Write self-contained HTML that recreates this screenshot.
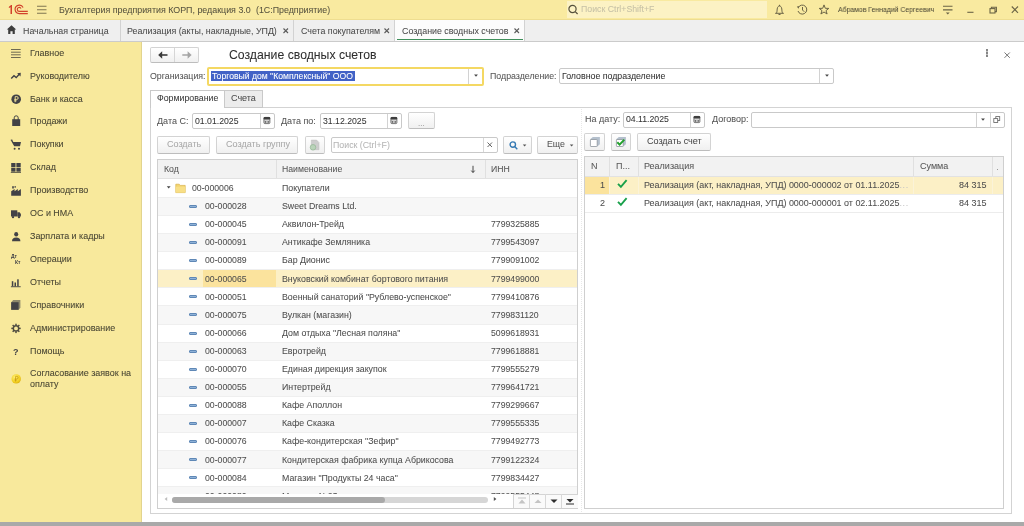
<!DOCTYPE html><html><head><meta charset="utf-8"><title>1C</title><style>
*{box-sizing:border-box;margin:0;padding:0}
html,body{width:1024px;height:526px;overflow:hidden;background:#fff;font-family:"Liberation Sans",sans-serif;color:#4d4d4d}
.a{position:absolute}
.t{position:absolute;white-space:nowrap;line-height:11px;font-size:8.7px;will-change:transform;-webkit-text-stroke:0.05px currentColor}
svg{position:absolute;overflow:visible}
.sep{position:absolute;top:0;width:1px;height:20px;background:#d4d4d4}
.inp{position:absolute;background:#fff;border:1px solid #c9c9c9;border-radius:2px}
.btn{position:absolute;background:linear-gradient(#ffffff,#f0f0f0);border:1px solid #d3d3d3;border-bottom-color:#bdbdbd;border-radius:2px}
.st{position:absolute;left:30.2px;font-size:8.95px;line-height:11px;color:#4a4734;white-space:nowrap;will-change:transform;-webkit-text-stroke:0.08px currentColor}
</style></head><body>
<div class="a" style="left:0px;top:0px;width:1024px;height:20px;background:#f9eaa0;"></div>
<div class="a" style="left:0px;top:19px;width:1024px;height:1px;background:#eedd90;"></div>
<svg style="left:8px;top:4px" width="22" height="12" viewBox="0 0 22 12"><g fill="none" stroke="#d2412c" stroke-width="1.15"><path d="M15.1 3.6 A4.2 4.2 0 1 0 11.2 9.6 H19.8"/><path d="M13.0 4.6 A1.95 1.95 0 1 0 11.2 7.35 H19.8"/></g><path d="M2.5 1 L4 1 L4 10 L2.5 10 Z M0.6 3.2 L2.6 1.1 L2.6 2.9 L1.3 4.1 Z" fill="#d2412c"/></svg>
<svg style="left:36px;top:5px" width="12" height="10" viewBox="0 0 12 10"><g stroke="#7f7650" stroke-width="1.1"><path d="M1 1.3H10.5M1 4.7H10.5M1 8.3H10.5"/></g></svg>
<div class="t" style="left:59px;top:4.7px;font-size:8.88px;color:#57533f;">Бухгалтерия предприятия КОРП, редакция 3.0</div>
<div class="t" style="left:255.8px;top:4.7px;font-size:8.85px;color:#57533f;">(1С:Предприятие)</div>
<div class="a" style="left:567px;top:1px;width:200px;height:17px;background:#fcf2c4;"></div>
<svg style="left:567px;top:4px" width="14" height="12" viewBox="0 0 14 12"><g fill="none" stroke="#55503c" stroke-width="1.2"><circle cx="5.5" cy="5" r="3.6"/><path d="M8.2 7.6L10.6 10"/></g></svg>
<div class="t" style="left:581px;top:4px;font-size:8.75px;color:#c6c1a6;">Поиск Ctrl+Shift+F</div>
<svg style="left:774px;top:4px" width="12" height="12" viewBox="0 0 12 12"><g fill="none" stroke="#6b6446" stroke-width="1"><path d="M1.2 9.3H9.8 M2.3 9.3 C3.2 8 3 6.5 3.2 5 C3.4 3 4.3 2 5.5 2 C6.7 2 7.6 3 7.8 5 C8 6.5 7.8 8 8.7 9.3"/><path d="M4.5 10.5H6.5"/><path d="M5.5 0.8V2"/></g></svg>
<svg style="left:796px;top:4px" width="13" height="12" viewBox="0 0 13 12"><g fill="none" stroke="#6b6446" stroke-width="1"><path d="M2.3 3.5 A4.5 4.5 0 1 1 2 7"/><path d="M6.5 3V6L8.3 7.8"/></g><path d="M0.8 2.5L3.3 2.2L2.6 4.8Z" fill="#6b6446"/></svg>
<svg style="left:818px;top:4px" width="12" height="12" viewBox="0 0 12 12"><path d="M6 0.9L7.3 4.3L10.8 4.4L8 6.6L9.1 10L6 8L2.9 10L4 6.6L1.2 4.4L4.7 4.3Z" fill="none" stroke="#6b6446" stroke-width="1"/></svg>
<div class="t" style="left:838px;top:4.3px;font-size:7.7px;color:#4f4b38;transform:scaleX(0.895);transform-origin:0 0">Абрамов Геннадий Сергеевич</div>
<svg style="left:942px;top:5px" width="12" height="11" viewBox="0 0 12 11"><g stroke="#6b6446" stroke-width="1.1"><path d="M1 1.3H10.5M1 4.9H10.5"/></g><path d="M3.8 7.6H7.7L5.75 9.6Z" fill="#6b6446"/></svg>
<svg style="left:966px;top:11px" width="9" height="3" viewBox="0 0 9 3"><path d="M1.3 1.3H7.5" stroke="#6b6446" stroke-width="1.1"/></svg>
<svg style="left:988px;top:6px" width="10" height="8" viewBox="0 0 10 8"><g fill="none" stroke="#6b6446" stroke-width="1.1"><rect x="2" y="2.6" width="5" height="4.4"/><path d="M3.4 2.6V1.2H8.4V5.6H7"/></g></svg>
<svg style="left:1010px;top:5px" width="10" height="10" viewBox="0 0 10 10"><path d="M1.8 1.5L8 7.8M8 1.5L1.8 7.8" stroke="#6b6446" stroke-width="1.1"/></svg>
<div class="a" style="left:0px;top:20px;width:1024px;height:21px;background:#efefef;"></div>
<div class="a" style="left:0px;top:41px;width:1024px;height:1px;background:#cbcbcb;"></div>
<svg style="left:6px;top:24px" width="11" height="11" viewBox="0 0 11 11"><path d="M5.5 1.2L10.2 5.6H8.8V10H6.6V7.3H4.4V10H2.2V5.6H0.8Z" fill="#3d3d3d"/></svg>
<div class="t" style="left:23px;top:25.7px;font-size:8.85px;color:#4a4a4a;">Начальная страница</div>
<div class="a" style="left:120px;top:20px;width:1px;height:21px;background:#d2d2d2;"></div>
<div class="t" style="left:127px;top:25.7px;font-size:8.85px;color:#4a4a4a;">Реализация (акты, накладные, УПД)</div>
<svg style="left:282px;top:26.8px" width="8" height="8" viewBox="0 0 8 8"><path d="M1.5 1.5L6 6M6 1.5L1.5 6" stroke="#5a5a5a" stroke-width="1.1"/></svg>
<div class="a" style="left:293px;top:20px;width:1px;height:21px;background:#d2d2d2;"></div>
<div class="t" style="left:301px;top:25.7px;font-size:8.85px;color:#4a4a4a;">Счета покупателям</div>
<svg style="left:383px;top:26.8px" width="8" height="8" viewBox="0 0 8 8"><path d="M1.5 1.5L6 6M6 1.5L1.5 6" stroke="#5a5a5a" stroke-width="1.1"/></svg>
<div class="a" style="left:394px;top:20px;width:1px;height:21px;background:#d2d2d2;"></div>
<div class="a" style="left:395px;top:20px;width:129px;height:21px;background:#fcfcfc;"></div>
<div class="a" style="left:397px;top:39px;width:126px;height:1.4px;background:#3f8f5a;"></div>
<div class="t" style="left:402px;top:25.7px;font-size:8.85px;color:#4a4a4a;">Создание сводных счетов</div>
<svg style="left:513px;top:26.8px" width="8" height="8" viewBox="0 0 8 8"><path d="M1.5 1.5L6 6M6 1.5L1.5 6" stroke="#5a5a5a" stroke-width="1.1"/></svg>
<div class="a" style="left:524px;top:20px;width:1px;height:21px;background:#d2d2d2;"></div>
<div class="a" style="left:0px;top:42px;width:141px;height:480px;background:#f8e99c;"></div>
<div class="a" style="left:141px;top:42px;width:1px;height:480px;background:#e2d48e;"></div>
<div class="st" style="top:47.7px">Главное</div>
<div class="st" style="top:70.6px">Руководителю</div>
<div class="st" style="top:93.5px">Банк и касса</div>
<div class="st" style="top:116.4px">Продажи</div>
<div class="st" style="top:139.3px">Покупки</div>
<div class="st" style="top:162.2px">Склад</div>
<div class="st" style="top:185.1px">Производство</div>
<div class="st" style="top:208.0px">ОС и НМА</div>
<div class="st" style="top:230.9px">Зарплата и кадры</div>
<div class="st" style="top:253.8px">Операции</div>
<div class="st" style="top:276.7px">Отчеты</div>
<div class="st" style="top:299.6px">Справочники</div>
<div class="st" style="top:322.5px">Администрирование</div>
<div class="st" style="top:346.2px">Помощь</div>
<div class="st" style="top:368.4px">Согласование заявок на</div>
<div class="st" style="top:378.7px">оплату</div>
<svg style="left:10px;top:48px" width="12" height="11" viewBox="0 0 12 11"><g stroke="#6f6a52" stroke-width="1"><path d="M1 1.5H10.7M1 4.2H10.7M1 6.8H10.7M1 9.5H10.7"/></g></svg>
<svg style="left:10px;top:72px" width="12" height="8" viewBox="0 0 12 8"><path d="M1.2 6.6L4 3.8L6.2 5.6L9.2 2.3" fill="none" stroke="#424246" stroke-width="1.4"/><path d="M7.2 1.2L10.8 0.8L10.5 4.4Z" fill="#424246"/></svg>
<svg style="left:10px;top:93px" width="12" height="12" viewBox="0 0 12 12"><circle cx="6.2" cy="6.2" r="4.8" fill="#424246"/><path d="M5.2 9.2V3.6H6.8A1.4 1.4 0 0 1 6.8 6.4H4.3M4.3 7.8H6.6" fill="none" stroke="#f8e99c" stroke-width="0.9"/></svg>
<svg style="left:11px;top:115px" width="11" height="12" viewBox="0 0 11 12"><path d="M1.2 4.2H9.2V11H1.2Z" fill="#424246"/><path d="M3.2 5V2.8A2 2 0 0 1 7.2 2.8V5" fill="none" stroke="#424246" stroke-width="1"/></svg>
<svg style="left:10px;top:139px" width="12" height="12" viewBox="0 0 12 12"><path d="M0.8 1.2H2.4L3.3 3H11L10 7.2H4.2Z" fill="#424246"/><path d="M0.8 1.1L2.4 1.1" stroke="#424246" stroke-width="1"/><circle cx="4.6" cy="9.8" r="1" fill="#424246"/><circle cx="9" cy="9.8" r="1" fill="#424246"/></svg>
<svg style="left:10px;top:162px" width="12" height="12" viewBox="0 0 12 12"><rect x="1.2" y="1" width="4.3" height="4" fill="#424246"/><rect x="6.4" y="1" width="4.3" height="4" fill="#424246"/><rect x="1.2" y="5.7" width="4.3" height="4" fill="#424246"/><rect x="6.4" y="5.7" width="4.3" height="4" fill="#424246"/><rect x="0.8" y="10" width="10.2" height="1" fill="#6f6a52"/></svg>
<svg style="left:10px;top:185px" width="12" height="12" viewBox="0 0 12 12"><path d="M1.2 10.8V6.2L4.6 4L4.6 6.2L7.8 4.1V6.2L10.9 4.1V10.8Z" fill="#424246"/><rect x="2.2" y="1.2" width="1.6" height="2.3" fill="#424246"/><rect x="4.5" y="1.2" width="1.4" height="1.4" fill="#424246"/></svg>
<svg style="left:10px;top:209px" width="12" height="10" viewBox="0 0 12 10"><path d="M1 1.3H7.3V7.5H1Z" fill="#424246"/><path d="M7.3 3.2H9.6L10.9 5V7.5H7.3Z" fill="#424246"/><circle cx="3" cy="8.1" r="1.2" fill="#424246"/><circle cx="9" cy="8.1" r="1.2" fill="#424246"/></svg>
<svg style="left:11px;top:231px" width="11" height="11" viewBox="0 0 11 11"><ellipse cx="5.2" cy="3.2" rx="2" ry="2.3" fill="#424246"/><path d="M1 10.3C1 7.5 2.5 6.4 5.2 6.4C7.9 6.4 9.4 7.5 9.4 10.3Z" fill="#424246"/></svg>
<div class="a" style="left:11px;top:254px;font-size:5px;line-height:5px;font-weight:bold;color:#424246;will-change:transform">Дт</div>
<div class="a" style="left:15px;top:259.5px;font-size:5px;line-height:5px;font-weight:bold;color:#424246;will-change:transform">Кт</div>
<svg style="left:10px;top:278px" width="12" height="10" viewBox="0 0 12 10"><g fill="#424246"><rect x="1.8" y="3.2" width="1.5" height="5.2"/><rect x="4.5" y="4.5" width="1.5" height="3.9"/><rect x="7.2" y="1.3" width="1.5" height="7.1"/><rect x="0.9" y="8.3" width="9.8" height="0.9"/></g></svg>
<svg style="left:10px;top:299px" width="12" height="12" viewBox="0 0 12 12"><path d="M3.2 1H10.4V8.8L8.6 10.8H1.2V3.2Z" fill="#8f8a6c"/><rect x="1.2" y="3.2" width="7.4" height="7.6" fill="#424246"/></svg>
<svg style="left:10px;top:323px" width="12" height="11" viewBox="0 0 12 11"><g transform="translate(6,5.4)" fill="#4f4c40"><circle r="2.7" fill="none" stroke="#4f4c40" stroke-width="1.5"/><rect x="-0.75" y="-4.7" width="1.5" height="1.9" transform="rotate(0)"/><rect x="-0.75" y="-4.7" width="1.5" height="1.9" transform="rotate(45)"/><rect x="-0.75" y="-4.7" width="1.5" height="1.9" transform="rotate(90)"/><rect x="-0.75" y="-4.7" width="1.5" height="1.9" transform="rotate(135)"/><rect x="-0.75" y="-4.7" width="1.5" height="1.9" transform="rotate(180)"/><rect x="-0.75" y="-4.7" width="1.5" height="1.9" transform="rotate(225)"/><rect x="-0.75" y="-4.7" width="1.5" height="1.9" transform="rotate(270)"/><rect x="-0.75" y="-4.7" width="1.5" height="1.9" transform="rotate(315)"/></g></svg>
<div class="a" style="left:13px;top:346.5px;font-size:9px;line-height:10px;font-weight:bold;color:#424246;will-change:transform">?</div>
<svg style="left:10px;top:372px" width="13" height="13" viewBox="0 0 13 13"><defs><radialGradient id="cg" cx="0.4" cy="0.35" r="0.7"><stop offset="0" stop-color="#fff27a"/><stop offset="0.7" stop-color="#f2cf1f"/><stop offset="1" stop-color="#d9ad10"/></radialGradient></defs><circle cx="6.2" cy="6.9" r="4.7" fill="url(#cg)"/><path d="M5.6 9.6V4.4H6.8A1.3 1.3 0 0 1 6.8 7H4.6M4.6 8.2H6.6" fill="none" stroke="#c99b0c" stroke-width="0.8"/></svg>
<div class="a" style="left:0px;top:522px;width:1024px;height:4px;background:#a9a9a9;"></div>
<div class="btn" style="left:150px;top:47px;width:49px;height:16px"></div>
<div class="a" style="left:174px;top:48px;width:1px;height:14px;background:#d6d6d6;"></div>
<svg style="left:156.6px;top:50.3px" width="12" height="10" viewBox="0 0 12 10"><path d="M10.5 5H3" stroke="#3a3a3a" stroke-width="1.6"/><path d="M1.2 5L5.2 1.3V8.7Z" fill="#3a3a3a"/></svg>
<svg style="left:180.8px;top:50.3px" width="12" height="10" viewBox="0 0 12 10"><path d="M1.3 5H8.8" stroke="#a4a4a4" stroke-width="1.5"/><path d="M10.6 5L6.6 1.3V8.7Z" fill="#a4a4a4"/></svg>
<div class="t" style="left:228.6px;top:48px;font-size:12.25px;color:#2e2e2e;line-height:14px">Создание сводных счетов</div>
<svg style="left:984px;top:48px" width="6" height="12" viewBox="0 0 6 12"><g fill="#6a6a6a"><circle cx="3" cy="2" r="0.9"/><circle cx="3" cy="5" r="0.9"/><circle cx="3" cy="8" r="0.9"/><rect x="2.6" y="1" width="0.8" height="8"/></g></svg>
<svg style="left:1003px;top:50.5px" width="9" height="9" viewBox="0 0 9 9"><path d="M1.5 1.5L6.8 6.8M6.8 1.5L1.5 6.8" stroke="#666" stroke-width="0.9"/></svg>
<div class="t" style="left:150.4px;top:71px;font-size:8.8px;color:#555;">Организация:</div>
<div class="a" style="left:207px;top:67px;width:277px;height:19px;background:#f4d863;border-radius:2px"></div>
<div class="a" style="left:209px;top:69px;width:273px;height:15px;background:#fff;"></div>
<div class="a" style="left:468px;top:69px;width:1px;height:15px;background:#d2d2d2;"></div>
<svg style="left:472px;top:73px" width="8" height="6" viewBox="0 0 8 6"><path d="M2.1 1.5H5.9L4 3.7Z" fill="#444"/></svg>
<div class="a" style="left:211px;top:71px;width:143.5px;height:10px;background:#4262c6;"></div>
<div class="t" style="left:211.8px;top:70.5px;font-size:8.65px;color:#ffffff;">Торговый дом "Комплексный" ООО</div>
<div class="t" style="left:489.6px;top:71px;font-size:8.8px;color:#555;">Подразделение:</div>
<div class="inp" style="left:559px;top:68px;width:275px;height:16px"></div>
<div class="a" style="left:819px;top:69px;width:1px;height:14px;background:#d2d2d2;"></div>
<svg style="left:823px;top:73px" width="8" height="6" viewBox="0 0 8 6"><path d="M2.1 1.5H5.9L4 3.7Z" fill="#444"/></svg>
<div class="t" style="left:562px;top:71px;font-size:8.8px;color:#333;">Головное подразделение</div>
<div class="a" style="left:150px;top:107px;width:862px;height:407px;background:#fff;border:1px solid #d3d3d3"></div>
<div class="a" style="left:224px;top:90px;width:39px;height:18px;background:#ececec;border:1px solid #c9c9c9"></div>
<div class="a" style="left:150px;top:90px;width:75px;height:18px;background:#fff;border:1px solid #c9c9c9;border-bottom:none"></div>
<div class="t" style="left:157.2px;top:93px;font-size:8.8px;color:#3a3a3a;">Формирование</div>
<div class="t" style="left:231.4px;top:93px;font-size:9px;color:#4a4a4a;">Счета</div>
<div class="t" style="left:157.3px;top:116px;font-size:9px;color:#555;">Дата С:</div>
<div class="inp" style="left:192px;top:113px;width:83px;height:16px"></div>
<div class="a" style="left:260px;top:114px;width:1px;height:14px;background:#d2d2d2;"></div>
<svg style="left:262px;top:116px" width="10" height="10" viewBox="0 0 10 10"><rect x="1.9" y="1.4" width="6" height="6.2" rx="1" fill="#d2d2d2" stroke="#5a5a5a" stroke-width="0.8"/><rect x="1.6" y="1.1" width="6.6" height="2.4" rx="1" fill="#3e3e3e"/><rect x="2.9" y="5.3" width="1.3" height="1.3" fill="#444"/><rect x="5.6" y="5.3" width="1.3" height="1.3" fill="#444"/></svg>
<div class="t" style="left:194.7px;top:116px;font-size:8.7px;color:#333;">01.01.2025</div>
<div class="t" style="left:281.3px;top:116px;font-size:9px;color:#555;">Дата по:</div>
<div class="inp" style="left:320px;top:113px;width:82px;height:16px"></div>
<div class="a" style="left:387px;top:114px;width:1px;height:14px;background:#d2d2d2;"></div>
<svg style="left:389px;top:116px" width="10" height="10" viewBox="0 0 10 10"><rect x="1.9" y="1.4" width="6" height="6.2" rx="1" fill="#d2d2d2" stroke="#5a5a5a" stroke-width="0.8"/><rect x="1.6" y="1.1" width="6.6" height="2.4" rx="1" fill="#3e3e3e"/><rect x="2.9" y="5.3" width="1.3" height="1.3" fill="#444"/><rect x="5.6" y="5.3" width="1.3" height="1.3" fill="#444"/></svg>
<div class="t" style="left:322.5px;top:116px;font-size:8.7px;color:#333;">31.12.2025</div>
<div class="btn" style="left:408px;top:112px;width:27px;height:17px"></div>
<div class="t" style="left:417.5px;top:117.5px;font-size:8px;color:#8a8a8a;">...</div>
<div class="btn" style="left:157px;top:136px;width:53px;height:18px"></div>
<div class="t" style="left:166.5px;top:139px;font-size:9px;color:#a9a9a9;">Создать</div>
<div class="btn" style="left:216px;top:136px;width:82px;height:18px"></div>
<div class="t" style="left:225.8px;top:139px;font-size:9.05px;color:#a9a9a9;">Создать группу</div>
<div class="btn" style="left:305px;top:136px;width:20px;height:18px"></div>
<svg style="left:308px;top:138px" width="14" height="14" viewBox="0 0 14 14"><path d="M3.3 2.1H8.6L11 4.5V11.7H3.3Z" fill="#cdcdcd" stroke="#bdbdbd" stroke-width="0.5"/><circle cx="5" cy="9.3" r="2.8" fill="#b9d3b9" stroke="#93b693" stroke-width="0.7"/></svg>
<div class="inp" style="left:331px;top:137px;width:167px;height:16px"></div>
<div class="a" style="left:483px;top:138px;width:1px;height:14px;background:#d8d8d8;"></div>
<svg style="left:486px;top:141px" width="8" height="8" viewBox="0 0 8 8"><path d="M1.5 1.5L6 6M6 1.5L1.5 6" stroke="#666" stroke-width="1"/></svg>
<div class="t" style="left:333px;top:140px;font-size:8.8px;color:#b5b5b5;">Поиск (Ctrl+F)</div>
<div class="btn" style="left:503px;top:136px;width:29px;height:18px"></div>
<svg style="left:508px;top:139.6px" width="12" height="12" viewBox="0 0 12 12"><g fill="none" stroke="#3479b3" stroke-width="1.4"><circle cx="4.8" cy="4.6" r="2.7"/><path d="M6.9 6.8L9.3 9.2"/></g></svg>
<svg style="left:522px;top:142.8px" width="6" height="5" viewBox="0 0 6 5"><path d="M0.8 1.5H4.4L2.6 3.4Z" fill="#555"/></svg>
<div class="btn" style="left:537px;top:136px;width:41px;height:18px"></div>
<div class="t" style="left:546.5px;top:139.4px;font-size:8.8px;color:#555;">Еще</div>
<svg style="left:569px;top:142.8px" width="6" height="5" viewBox="0 0 6 5"><path d="M0.8 1.5H4.4L2.6 3.4Z" fill="#555"/></svg>
<div class="a" style="left:157px;top:159px;width:421px;height:350px;background:#fff;border:1px solid #cfcfcf"></div>
<div class="a" style="left:158px;top:160px;width:419px;height:19px;background:#f2f2f2;"></div>
<div class="a" style="left:158px;top:178px;width:419px;height:1px;background:#e2e2e2;"></div>
<div class="a" style="left:276px;top:160px;width:1px;height:18px;background:#e0e0e0;"></div>
<div class="a" style="left:485px;top:160px;width:1px;height:18px;background:#e0e0e0;"></div>
<div class="t" style="left:163.7px;top:164px;font-size:8.7px;color:#575757;">Код</div>
<div class="t" style="left:282px;top:164px;font-size:8.7px;color:#575757;">Наименование</div>
<svg style="left:469px;top:164px" width="8" height="10" viewBox="0 0 8 10"><path d="M4 1.8V8.2" stroke="#333" stroke-width="0.9"/><path d="M2.3 6.6L4 8.6L5.7 6.6" fill="none" stroke="#333" stroke-width="0.9"/></svg>
<div class="t" style="left:490.7px;top:164px;font-size:8.7px;color:#575757;">ИНН</div>
<div class="a" style="left:158px;top:179px;width:419px;height:315px;overflow:hidden">
<svg style="left:8px;top:6px" width="6" height="5" viewBox="0 0 6 5"><path d="M0.8 1.2H4.6L2.7 3.6Z" fill="#444"/></svg>
<svg style="left:17px;top:4px" width="12" height="11" viewBox="0 0 12 11"><path d="M0.8 1.2H4.2L5.2 2.4H10.2V9.6H0.8Z" fill="#f3d56f" stroke="#d9b24a" stroke-width="0.7"/><path d="M0.8 3.6H10.2V9.6H0.8Z" fill="#f8df86"/></svg>
<div class="t" style="left:34.3px;top:3.9999999999999885px;font-size:8.7px;color:#4d4d4d;">00-000006</div>
<div class="t" style="left:124px;top:3.9999999999999885px;font-size:8.8px;color:#4d4d4d;">Покупатели</div>
<div class="t" style="left:332.7px;top:3.9999999999999885px;font-size:8.7px;color:#4d4d4d;"></div>
<div class="a" style="left:0px;top:18px;width:419px;height:18px;background:#f7f7f7;"></div>
<div class="a" style="left:0px;top:18px;width:419px;height:1px;background:#efefef;"></div>
<div class="a" style="left:30.8px;top:25.8px;width:8.2px;height:2.8px;background:#8fb2d8;border:0.7px solid #5f88b6;border-radius:1px"></div>
<div class="t" style="left:46.8px;top:22.099999999999984px;font-size:8.7px;color:#4d4d4d;">00-000028</div>
<div class="t" style="left:124px;top:22.099999999999984px;font-size:8.8px;color:#4d4d4d;">Sweet Dreams Ltd.</div>
<div class="t" style="left:332.7px;top:22.099999999999984px;font-size:8.7px;color:#4d4d4d;"></div>
<div class="a" style="left:0px;top:36px;width:419px;height:1px;background:#efefef;"></div>
<div class="a" style="left:30.8px;top:43.8px;width:8.2px;height:2.8px;background:#8fb2d8;border:0.7px solid #5f88b6;border-radius:1px"></div>
<div class="t" style="left:46.8px;top:40.199999999999974px;font-size:8.7px;color:#4d4d4d;">00-000045</div>
<div class="t" style="left:124px;top:40.199999999999974px;font-size:8.8px;color:#4d4d4d;">Аквилон-Трейд</div>
<div class="t" style="left:332.7px;top:40.199999999999974px;font-size:8.7px;color:#4d4d4d;">7799325885</div>
<div class="a" style="left:0px;top:54px;width:419px;height:18px;background:#f7f7f7;"></div>
<div class="a" style="left:0px;top:54px;width:419px;height:1px;background:#efefef;"></div>
<div class="a" style="left:30.8px;top:61.8px;width:8.2px;height:2.8px;background:#8fb2d8;border:0.7px solid #5f88b6;border-radius:1px"></div>
<div class="t" style="left:46.8px;top:58.3px;font-size:8.7px;color:#4d4d4d;">00-000091</div>
<div class="t" style="left:124px;top:58.3px;font-size:8.8px;color:#4d4d4d;">Антикафе Земляника</div>
<div class="t" style="left:332.7px;top:58.3px;font-size:8.7px;color:#4d4d4d;">7799543097</div>
<div class="a" style="left:0px;top:72px;width:419px;height:1px;background:#efefef;"></div>
<div class="a" style="left:30.8px;top:79.8px;width:8.2px;height:2.8px;background:#8fb2d8;border:0.7px solid #5f88b6;border-radius:1px"></div>
<div class="t" style="left:46.8px;top:76.39999999999999px;font-size:8.7px;color:#4d4d4d;">00-000089</div>
<div class="t" style="left:124px;top:76.39999999999999px;font-size:8.8px;color:#4d4d4d;">Бар Дионис</div>
<div class="t" style="left:332.7px;top:76.39999999999999px;font-size:8.7px;color:#4d4d4d;">7799091002</div>
<div class="a" style="left:0px;top:90px;width:419px;height:18px;background:#fcf0c6;"></div>
<div class="a" style="left:45px;top:90px;width:73px;height:18px;background:#fbe39d;"></div>
<div class="a" style="left:0px;top:90px;width:419px;height:1px;background:#efefef;"></div>
<div class="a" style="left:30.8px;top:97.8px;width:8.2px;height:2.8px;background:#8fb2d8;border:0.7px solid #5f88b6;border-radius:1px"></div>
<div class="t" style="left:46.8px;top:94.49999999999999px;font-size:8.7px;color:#4d4d4d;">00-000065</div>
<div class="t" style="left:124px;top:94.49999999999999px;font-size:8.8px;color:#4d4d4d;">Внуковский комбинат бортового питания</div>
<div class="t" style="left:332.7px;top:94.49999999999999px;font-size:8.7px;color:#4d4d4d;">7799499000</div>
<div class="a" style="left:0px;top:108px;width:419px;height:1px;background:#efefef;"></div>
<div class="a" style="left:30.8px;top:115.8px;width:8.2px;height:2.8px;background:#8fb2d8;border:0.7px solid #5f88b6;border-radius:1px"></div>
<div class="t" style="left:46.8px;top:112.60000000000001px;font-size:8.7px;color:#4d4d4d;">00-000051</div>
<div class="t" style="left:124px;top:112.60000000000001px;font-size:8.8px;color:#4d4d4d;">Военный санаторий "Рублево-успенское"</div>
<div class="t" style="left:332.7px;top:112.60000000000001px;font-size:8.7px;color:#4d4d4d;">7799410876</div>
<div class="a" style="left:0px;top:126px;width:419px;height:19px;background:#f7f7f7;"></div>
<div class="a" style="left:0px;top:126px;width:419px;height:1px;background:#efefef;"></div>
<div class="a" style="left:30.8px;top:133.8px;width:8.2px;height:2.8px;background:#8fb2d8;border:0.7px solid #5f88b6;border-radius:1px"></div>
<div class="t" style="left:46.8px;top:130.7px;font-size:8.7px;color:#4d4d4d;">00-000075</div>
<div class="t" style="left:124px;top:130.7px;font-size:8.8px;color:#4d4d4d;">Вулкан (магазин)</div>
<div class="t" style="left:332.7px;top:130.7px;font-size:8.7px;color:#4d4d4d;">7799831120</div>
<div class="a" style="left:0px;top:145px;width:419px;height:1px;background:#efefef;"></div>
<div class="a" style="left:30.8px;top:152.8px;width:8.2px;height:2.8px;background:#8fb2d8;border:0.7px solid #5f88b6;border-radius:1px"></div>
<div class="t" style="left:46.8px;top:148.8px;font-size:8.7px;color:#4d4d4d;">00-000066</div>
<div class="t" style="left:124px;top:148.8px;font-size:8.8px;color:#4d4d4d;">Дом отдыха "Лесная поляна"</div>
<div class="t" style="left:332.7px;top:148.8px;font-size:8.7px;color:#4d4d4d;">5099618931</div>
<div class="a" style="left:0px;top:163px;width:419px;height:18px;background:#f7f7f7;"></div>
<div class="a" style="left:0px;top:163px;width:419px;height:1px;background:#efefef;"></div>
<div class="a" style="left:30.8px;top:170.8px;width:8.2px;height:2.8px;background:#8fb2d8;border:0.7px solid #5f88b6;border-radius:1px"></div>
<div class="t" style="left:46.8px;top:166.90000000000003px;font-size:8.7px;color:#4d4d4d;">00-000063</div>
<div class="t" style="left:124px;top:166.90000000000003px;font-size:8.8px;color:#4d4d4d;">Евротрейд</div>
<div class="t" style="left:332.7px;top:166.90000000000003px;font-size:8.7px;color:#4d4d4d;">7799618881</div>
<div class="a" style="left:0px;top:181px;width:419px;height:1px;background:#efefef;"></div>
<div class="a" style="left:30.8px;top:188.8px;width:8.2px;height:2.8px;background:#8fb2d8;border:0.7px solid #5f88b6;border-radius:1px"></div>
<div class="t" style="left:46.8px;top:185.0px;font-size:8.7px;color:#4d4d4d;">00-000070</div>
<div class="t" style="left:124px;top:185.0px;font-size:8.8px;color:#4d4d4d;">Единая дирекция закупок</div>
<div class="t" style="left:332.7px;top:185.0px;font-size:8.7px;color:#4d4d4d;">7799555279</div>
<div class="a" style="left:0px;top:199px;width:419px;height:18px;background:#f7f7f7;"></div>
<div class="a" style="left:0px;top:199px;width:419px;height:1px;background:#efefef;"></div>
<div class="a" style="left:30.8px;top:206.8px;width:8.2px;height:2.8px;background:#8fb2d8;border:0.7px solid #5f88b6;border-radius:1px"></div>
<div class="t" style="left:46.8px;top:203.10000000000002px;font-size:8.7px;color:#4d4d4d;">00-000055</div>
<div class="t" style="left:124px;top:203.10000000000002px;font-size:8.8px;color:#4d4d4d;">Интертрейд</div>
<div class="t" style="left:332.7px;top:203.10000000000002px;font-size:8.7px;color:#4d4d4d;">7799641721</div>
<div class="a" style="left:0px;top:217px;width:419px;height:1px;background:#efefef;"></div>
<div class="a" style="left:30.8px;top:224.8px;width:8.2px;height:2.8px;background:#8fb2d8;border:0.7px solid #5f88b6;border-radius:1px"></div>
<div class="t" style="left:46.8px;top:221.2px;font-size:8.7px;color:#4d4d4d;">00-000088</div>
<div class="t" style="left:124px;top:221.2px;font-size:8.8px;color:#4d4d4d;">Кафе Аполлон</div>
<div class="t" style="left:332.7px;top:221.2px;font-size:8.7px;color:#4d4d4d;">7799299667</div>
<div class="a" style="left:0px;top:235px;width:419px;height:18px;background:#f7f7f7;"></div>
<div class="a" style="left:0px;top:235px;width:419px;height:1px;background:#efefef;"></div>
<div class="a" style="left:30.8px;top:242.8px;width:8.2px;height:2.8px;background:#8fb2d8;border:0.7px solid #5f88b6;border-radius:1px"></div>
<div class="t" style="left:46.8px;top:239.3px;font-size:8.7px;color:#4d4d4d;">00-000007</div>
<div class="t" style="left:124px;top:239.3px;font-size:8.8px;color:#4d4d4d;">Кафе Сказка</div>
<div class="t" style="left:332.7px;top:239.3px;font-size:8.7px;color:#4d4d4d;">7799555335</div>
<div class="a" style="left:0px;top:253px;width:419px;height:1px;background:#efefef;"></div>
<div class="a" style="left:30.8px;top:260.8px;width:8.2px;height:2.8px;background:#8fb2d8;border:0.7px solid #5f88b6;border-radius:1px"></div>
<div class="t" style="left:46.8px;top:257.40000000000003px;font-size:8.7px;color:#4d4d4d;">00-000076</div>
<div class="t" style="left:124px;top:257.40000000000003px;font-size:8.8px;color:#4d4d4d;">Кафе-кондитерская "Зефир"</div>
<div class="t" style="left:332.7px;top:257.40000000000003px;font-size:8.7px;color:#4d4d4d;">7799492773</div>
<div class="a" style="left:0px;top:271px;width:419px;height:18px;background:#f7f7f7;"></div>
<div class="a" style="left:0px;top:271px;width:419px;height:1px;background:#efefef;"></div>
<div class="a" style="left:30.8px;top:278.8px;width:8.2px;height:2.8px;background:#8fb2d8;border:0.7px solid #5f88b6;border-radius:1px"></div>
<div class="t" style="left:46.8px;top:275.5px;font-size:8.7px;color:#4d4d4d;">00-000077</div>
<div class="t" style="left:124px;top:275.5px;font-size:8.8px;color:#4d4d4d;">Кондитерская фабрика купца Абрикосова</div>
<div class="t" style="left:332.7px;top:275.5px;font-size:8.7px;color:#4d4d4d;">7799122324</div>
<div class="a" style="left:0px;top:289px;width:419px;height:1px;background:#efefef;"></div>
<div class="a" style="left:30.8px;top:296.8px;width:8.2px;height:2.8px;background:#8fb2d8;border:0.7px solid #5f88b6;border-radius:1px"></div>
<div class="t" style="left:46.8px;top:293.6px;font-size:8.7px;color:#4d4d4d;">00-000084</div>
<div class="t" style="left:124px;top:293.6px;font-size:8.8px;color:#4d4d4d;">Магазин "Продукты 24 часа"</div>
<div class="t" style="left:332.7px;top:293.6px;font-size:8.7px;color:#4d4d4d;">7799834427</div>
<div class="a" style="left:0px;top:307px;width:419px;height:19px;background:#f7f7f7;"></div>
<div class="a" style="left:0px;top:307px;width:419px;height:1px;background:#efefef;"></div>
<div class="a" style="left:30.8px;top:314.8px;width:8.2px;height:2.8px;background:#8fb2d8;border:0.7px solid #5f88b6;border-radius:1px"></div>
<div class="t" style="left:46.8px;top:311.70000000000005px;font-size:8.7px;color:#4d4d4d;">00-000080</div>
<div class="t" style="left:124px;top:311.70000000000005px;font-size:8.8px;color:#4d4d4d;">Магазин №23</div>
<div class="t" style="left:332.7px;top:311.70000000000005px;font-size:8.7px;color:#4d4d4d;">7799555448</div>
</div>
<svg style="left:163px;top:496px" width="6" height="6" viewBox="0 0 6 6"><path d="M4.2 1L1.6 3L4.2 5Z" fill="#bdbdbd"/></svg>
<div class="a" style="left:172px;top:497px;width:316px;height:6px;background:#d6d6d6;border-radius:3px"></div>
<div class="a" style="left:172px;top:497px;width:213px;height:6px;background:#a9a9a9;border-radius:3px"></div>
<svg style="left:492px;top:496px" width="6" height="6" viewBox="0 0 6 6"><path d="M1.8 1L4.4 3L1.8 5Z" fill="#555"/></svg>
<div class="a" style="left:513px;top:494px;width:65px;height:14px;background:#fafafa;border:1px solid #d4d4d4;border-right:none;border-bottom:none"></div>
<div class="a" style="left:529px;top:494px;width:1px;height:14px;background:#d8d8d8;"></div>
<div class="a" style="left:545px;top:494px;width:1px;height:14px;background:#d8d8d8;"></div>
<div class="a" style="left:561px;top:494px;width:1px;height:14px;background:#d8d8d8;"></div>
<svg style="left:516px;top:496px" width="12" height="10" viewBox="0 0 12 10"><path d="M2 2H10" stroke="#c4c4c4" stroke-width="1"/><path d="M2.5 7.5H9.5L6 3.5Z" fill="#c4c4c4"/></svg>
<svg style="left:532px;top:496px" width="12" height="10" viewBox="0 0 12 10"><path d="M2.5 7H9.5L6 3.5Z" fill="#c4c4c4"/></svg>
<svg style="left:548px;top:496px" width="12" height="10" viewBox="0 0 12 10"><path d="M2.5 3.5H9.5L6 7Z" fill="#2d2d2d"/></svg>
<svg style="left:564px;top:496px" width="12" height="10" viewBox="0 0 12 10"><path d="M2.5 3H9.5L6 6.5Z" fill="#2d2d2d"/><path d="M2 8H10" stroke="#2d2d2d" stroke-width="1"/></svg>
<div class="a" style="left:581px;top:109px;width:0;height:403px;border-left:1px dotted #e8e8e8"></div>
<div class="t" style="left:584.7px;top:114px;font-size:9px;color:#555;">На дату:</div>
<div class="inp" style="left:623px;top:112px;width:82px;height:16px"></div>
<div class="a" style="left:690px;top:113px;width:1px;height:14px;background:#d2d2d2;"></div>
<svg style="left:692.3px;top:114.8px" width="10" height="10" viewBox="0 0 10 10"><rect x="1.9" y="1.4" width="6" height="6.2" rx="1" fill="#d2d2d2" stroke="#5a5a5a" stroke-width="0.8"/><rect x="1.6" y="1.1" width="6.6" height="2.4" rx="1" fill="#3e3e3e"/><rect x="2.9" y="5.3" width="1.3" height="1.3" fill="#444"/><rect x="5.6" y="5.3" width="1.3" height="1.3" fill="#444"/></svg>
<div class="t" style="left:625.5px;top:114px;font-size:8.7px;color:#333;">04.11.2025</div>
<div class="t" style="left:711.6px;top:114px;font-size:9px;color:#555;">Договор:</div>
<div class="inp" style="left:751px;top:112px;width:254px;height:16px"></div>
<div class="a" style="left:976px;top:113px;width:1px;height:14px;background:#d2d2d2;"></div>
<div class="a" style="left:990px;top:113px;width:1px;height:14px;background:#d2d2d2;"></div>
<svg style="left:979px;top:117px" width="8" height="6" viewBox="0 0 8 6"><path d="M2.1 1.5H5.9L4 3.7Z" fill="#444"/></svg>
<svg style="left:992px;top:114px" width="12" height="12" viewBox="0 0 12 12"><g fill="#fff" stroke="#666" stroke-width="0.85"><rect x="3.8" y="2.6" width="3.9" height="3.9"/><rect x="1.8" y="4.6" width="3.9" height="3.9"/></g></svg>
<div class="btn" style="left:584px;top:133px;width:21px;height:18px"></div>
<svg style="left:588px;top:136px" width="14" height="13" viewBox="0 0 14 13"><path d="M2.2 3.3L4.8 0.9H11.9V8.2L9.2 10.6Z" fill="#b4c0cd"/><rect x="2.4" y="3.5" width="6.8" height="7" rx="0.6" fill="#fff" stroke="#8d949c" stroke-width="0.8"/></svg>
<div class="btn" style="left:611px;top:133px;width:20px;height:18px"></div>
<svg style="left:614px;top:136px" width="14" height="13" viewBox="0 0 14 13"><path d="M2.2 3.3L4.8 0.9H11.9V8.2L9.2 10.6Z" fill="#b4c0cd"/><rect x="2.4" y="3.5" width="6.8" height="7" rx="0.6" fill="#fff" stroke="#8d949c" stroke-width="0.8"/><path d="M3.3 6.3L5.6 8.6L10.3 3.6" fill="none" stroke="#22a12c" stroke-width="2"/></svg>
<div class="btn" style="left:637px;top:133px;width:74px;height:18px"></div>
<div class="t" style="left:646.5px;top:136px;font-size:9px;color:#4a4a4a;">Создать счет</div>
<div class="a" style="left:584px;top:156px;width:420px;height:353px;background:#fff;border:1px solid #cfcfcf"></div>
<div class="a" style="left:585px;top:157px;width:418px;height:19px;background:#f2f2f2;"></div>
<div class="a" style="left:585px;top:176px;width:418px;height:1px;background:#e2e2e2;"></div>
<div class="a" style="left:609px;top:157px;width:1px;height:19px;background:#e0e0e0;"></div>
<div class="a" style="left:638px;top:157px;width:1px;height:19px;background:#e0e0e0;"></div>
<div class="a" style="left:913px;top:157px;width:1px;height:19px;background:#e0e0e0;"></div>
<div class="a" style="left:992px;top:157px;width:1px;height:19px;background:#e0e0e0;"></div>
<div class="t" style="left:591px;top:161px;font-size:9px;color:#575757;">N</div>
<div class="t" style="left:615.8px;top:161px;font-size:9px;color:#575757;">П...</div>
<div class="t" style="left:643.9px;top:161px;font-size:9px;color:#575757;">Реализация</div>
<div class="t" style="left:919.6px;top:161px;font-size:9px;color:#575757;">Сумма</div>
<svg style="left:995px;top:168px" width="6" height="4" viewBox="0 0 6 4"><rect x="2" y="1" width="1" height="1" fill="#999"/></svg>
<div class="a" style="left:585px;top:177px;width:418px;height:17px;background:#fcf0c6;"></div>
<div class="a" style="left:585px;top:177px;width:24px;height:17px;background:#fbe39d;"></div>
<div class="a" style="left:609px;top:177px;width:1px;height:17px;background:#fbf3d8;"></div>
<div class="a" style="left:638px;top:177px;width:1px;height:17px;background:#fbf3d8;"></div>
<div class="a" style="left:913px;top:177px;width:1px;height:17px;background:#fbf3d8;"></div>
<div class="a" style="left:992px;top:177px;width:1px;height:17px;background:#fbf3d8;"></div>
<div class="a" style="left:585px;top:194px;width:418px;height:1px;background:#ececec;"></div>
<div class="a" style="left:585px;top:212px;width:418px;height:1px;background:#ececec;"></div>
<div class="t" style="left:600.3px;top:179.7px;font-size:9px;color:#4d4d4d;">1</div>
<svg style="left:617px;top:179px" width="11" height="10" viewBox="0 0 11 10"><path d="M1 4.8L3.9 7.9L9.6 1.1" fill="none" stroke="#18a04a" stroke-width="1.8"/></svg>
<div class="t" style="left:644px;top:179.7px;font-size:8.95px;color:#4d4d4d;">Реализация (акт, накладная, УПД) 0000-000002 от 01.11.2025<span style="color:#c4c4c4;letter-spacing:0.6px">...</span></div>
<div class="t" style="left:958px;top:179.7px;font-size:9px;color:#4d4d4d;width:28.5px;text-align:right">84 315</div>
<div class="t" style="left:600.3px;top:197.7px;font-size:9px;color:#4d4d4d;">2</div>
<svg style="left:617px;top:197px" width="11" height="10" viewBox="0 0 11 10"><path d="M1 4.8L3.9 7.9L9.6 1.1" fill="none" stroke="#18a04a" stroke-width="1.8"/></svg>
<div class="t" style="left:644px;top:197.7px;font-size:8.95px;color:#4d4d4d;">Реализация (акт, накладная, УПД) 0000-000001 от 02.11.2025<span style="color:#c4c4c4;letter-spacing:0.6px">...</span></div>
<div class="t" style="left:958px;top:197.7px;font-size:9px;color:#4d4d4d;width:28.5px;text-align:right">84 315</div>
</body></html>
